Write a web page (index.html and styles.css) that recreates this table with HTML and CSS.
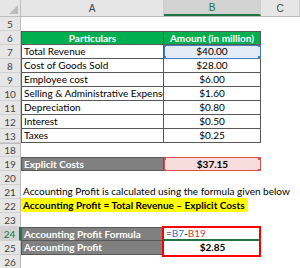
FILE: index.html
```html
<!DOCTYPE html>
<html lang="en">
<head>
    <meta charset="UTF-8">
    <title>Accounting Profit</title>
    <link rel="stylesheet" href="styles.css">
</head>
<body>

<div class="sheet">
    <div class="row head">
        <div class="corner"><span class="tri"></span></div>
        <div class="col">A</div>
        <div class="col active">B</div>
        <div class="col">C</div>
    </div>

    <div class="row"><div class="num">5</div><div class="cell"></div><div class="cell"></div><div class="cell"></div></div>
    <div class="row">
        <div class="num">6</div>
        <div class="cell th tl">Particulars</div>
        <div class="cell th">Amount (in million)</div>
        <div class="cell"></div>
    </div>
    <div class="row"><div class="num">7</div><div class="cell t tl">Total Revenue</div><div class="cell t amt ref-blue">$40.00</div><div class="cell"></div></div>
    <div class="row"><div class="num">8</div><div class="cell t tl">Cost of Goods Sold</div><div class="cell t amt">$28.00</div><div class="cell"></div></div>
    <div class="row"><div class="num">9</div><div class="cell t tl">Employee cost</div><div class="cell t amt">$6.00</div><div class="cell"></div></div>
    <div class="row"><div class="num">10</div><div class="cell t tl">Selling &amp; Administrative Expense</div><div class="cell t amt">$1.60</div><div class="cell"></div></div>
    <div class="row"><div class="num">11</div><div class="cell t tl">Depreciation</div><div class="cell t amt">$0.80</div><div class="cell"></div></div>
    <div class="row"><div class="num">12</div><div class="cell t tl">Interest</div><div class="cell t amt">$0.50</div><div class="cell"></div></div>
    <div class="row"><div class="num">13</div><div class="cell t tl">Taxes</div><div class="cell t amt">$0.25</div><div class="cell"></div></div>
    <div class="row"><div class="num hidden-above">18</div><div class="cell"></div><div class="cell"></div><div class="cell"></div></div>
    <div class="row"><div class="num">19</div><div class="cell g tl top">Explicit Costs</div><div class="cell amt bold ref-red">$37.15</div><div class="cell"></div></div>
    <div class="row"><div class="num">20</div><div class="cell"></div><div class="cell"></div><div class="cell"></div></div>
    <div class="row"><div class="num">21</div><div class="cell over">Accounting Profit is calculated using the formula given below</div><div class="cell"></div><div class="cell"></div></div>
    <div class="row"><div class="num">22</div><div class="cell over"><span class="mark">Accounting Profit = Total Revenue – Explicit Costs</span></div><div class="cell"></div><div class="cell"></div></div>
    <div class="row"><div class="num">23</div><div class="cell"></div><div class="cell"></div><div class="cell"></div></div>
    <div class="row">
        <div class="num sel">24</div>
        <div class="cell g tl top">Accounting Profit Formula</div>
        <div class="cell edit"><span>=</span><span class="blue">B7</span><span>-</span><span class="red">B19</span></div>
        <div class="cell"></div>
    </div>
    <div class="row">
        <div class="num">25</div>
        <div class="cell g tl">Accounting Profit</div>
        <div class="cell amt bold">$2.85</div>
        <div class="cell"></div>
    </div>
    <div class="row"><div class="num">26</div><div class="cell"></div><div class="cell"></div><div class="cell"></div></div>

    <div class="box"></div>
</div>

</body>
</html>
```

FILE: styles.css
```css
body {
    margin: 0;
    background: #fff;
    font-family: Lato, "Liberation Sans", sans-serif;
    font-size: 10px;
    color: #000;
}

.sheet {
    position: relative;
    width: 300px;
    height: 268px;
    overflow: hidden;
}

.row {
    display: grid;
    grid-template-columns: 21px 143px 97px 1fr;
    height: 14px;
}

.row.head {
    height: 17px;
    background: #e6e6e6;
    border-bottom: 1px solid #bdbdbd;
    box-sizing: border-box;
}

.corner {
    position: relative;
    border-right: 1px solid #bdbdbd;
}

.tri {
    position: absolute;
    right: 2px;
    bottom: 2px;
    width: 0;
    height: 0;
    border-left: 9px solid transparent;
    border-bottom: 9px solid #bcbcbc;
}

.col {
    display: flex;
    align-items: center;
    justify-content: center;
    color: #444;
    font-family: "Liberation Sans", sans-serif;
    font-size: 10px;
    border-right: 1px solid #cfcfcf;
}

.col.active {
    background: #d2d2d2;
    color: #217346;
    border-bottom: 2px solid #217346;
}

.num {
    display: flex;
    align-items: center;
    justify-content: center;
    background: #e6e6e6;
    color: #444;
    border-right: 1px solid #bdbdbd;
    border-bottom: 1px solid #d0d0d0;
    box-sizing: border-box;
    font-size: 10px;
}

.num.hidden-above {
    border-top: 1px solid #bdbdbd;
}

.num.sel {
    background: #d2d2d2;
    color: #217346;
    border-right: 2px solid #217346;
}

.cell {
    box-sizing: border-box;
    padding: 0 2px;
    line-height: 13px;
    white-space: nowrap;
    overflow: hidden;
    position: relative;
}

.cell.t,
.cell.th,
.cell.g {
    border-right: 1px solid #595959;
    border-bottom: 1px solid #595959;
}

.cell.tl {
    border-left: 1px solid #595959;
}

.cell.th {
    background: #00b050;
    color: #fff;
    font-weight: bold;
    text-align: center;
    border-top: 1px solid #595959;
    line-height: 12px;
}

.cell.g {
    background: #808080;
    color: #fff;
    font-weight: bold;
}

.cell.top {
    border-top: 1px solid #595959;
    line-height: 12px;
}

.amt {
    text-align: center;
}

.bold {
    font-weight: bold;
}

.over {
    overflow: visible;
    z-index: 1;
}

.mark {
    background: #ffff00;
    font-weight: bold;
    padding: 1px 3px 1px 2px;
    margin-left: -2px;
}

.ref-blue {
    background: #e3ebf7;
    outline: 1px solid #4a7ebb;
    outline-offset: -1px;
}

.ref-red {
    background: #f7dcdc;
    outline: 1px solid #d9534f;
    outline-offset: -1px;
    border-top: 1px solid #d9534f;
}

.ref-blue::before,
.ref-blue::after,
.ref-red::before,
.ref-red::after {
    content: "";
    position: absolute;
    width: 3px;
    height: 3px;
}

.ref-blue::before,
.ref-red::before {
    left: -1px;
    top: -1px;
    box-shadow: 95px 0 0 currentColor, 0 12px 0 currentColor, 95px 12px 0 currentColor;
}

.ref-blue::before {
    background: #4a7ebb;
    color: #4a7ebb;
}

.ref-red::before {
    background: #d9534f;
    color: #d9534f;
}

.edit {
    border-bottom: 2px solid #217346;
    line-height: 12px;
}

.blue {
    color: #3a6fd0;
}

.red {
    color: #d03a3a;
}

.box {
    position: absolute;
    left: 162px;
    top: 226px;
    width: 95px;
    height: 27px;
    border: 2px solid #ff0000;
}
```
